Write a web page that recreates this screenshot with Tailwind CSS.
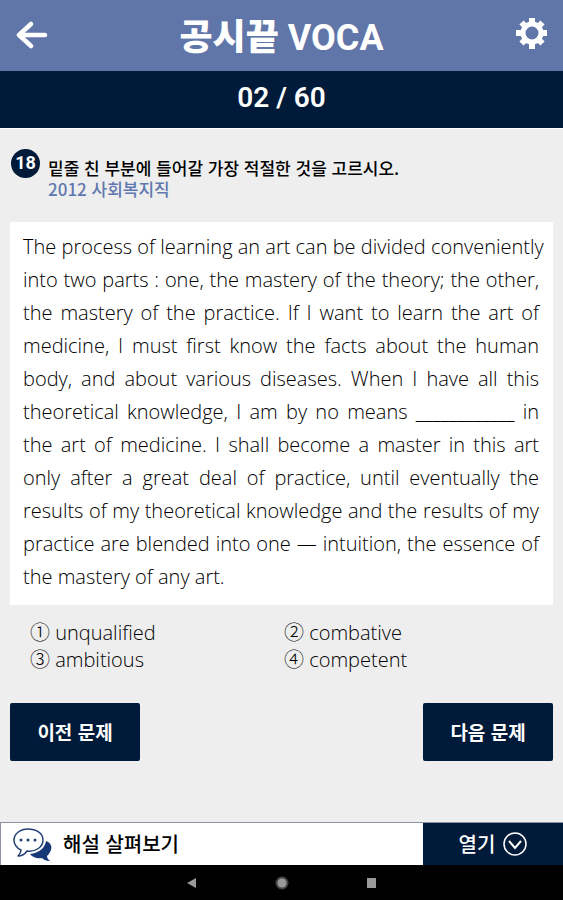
<!DOCTYPE html>
<html lang="ko">
  <head>
    <meta charset="UTF-8" />
    <meta name="viewport" content="width=device-width, initial-scale=1.0" />
    <title>공시끝 VOCA</title>
    <script src="https://cdn.jsdelivr.net/npm/@tailwindcss/browser@4"></script>
  </head>
  <body class="min-h-screen flex flex-col bg-[#eeeeee] text-black font-['Noto_Sans_CJK_KR',sans-serif]">
    <header class="h-[71px] px-4 flex justify-between items-center bg-[#6075a8] text-white">
      <button type="button" aria-label="뒤로" class="w-8 pb-1">
        <svg class="w-8 h-8" viewBox="0 0 32 32" fill="none" stroke="currentColor" stroke-width="4.5" stroke-linecap="round" stroke-linejoin="round">
          <path d="M29 17H3M15 6L3 17l12 11" />
        </svg>
      </button>
      <h1 class="pt-1 text-[36px] leading-none font-black font-['Roboto','Noto_Sans_CJK_KR',sans-serif]">공시끝 <span class="font-bold">VOCA</span></h1>
      <button type="button" aria-label="설정" class="w-8 pb-1">
        <svg class="w-8 h-8" viewBox="0 0 32 32" fill="none" stroke="currentColor">
          <circle cx="17" cy="15" r="9" stroke-width="5" />
          <path stroke-width="6" d="M17-1v6M17 25v6M1 15h6M27 15h6M6.5 4.5l4 4M23.5 21.5l4 4M27.5 4.5l-4 4M10.5 21.5l-4 4" />
        </svg>
      </button>
    </header>

    <div class="h-[57px] pb-1 flex justify-center items-center bg-[#001a3a] text-white text-[28px] leading-none font-semibold font-['Roboto',sans-serif]">02 / 60</div>

    <main class="flex-1 px-[10px] pt-5 border-t border-white">
      <div class="flex gap-2">
        <span class="w-[29px] h-[29px] pb-[2px] rounded-full bg-[#001a3a] text-white text-[18px] leading-none font-bold font-['Roboto',sans-serif] flex justify-center items-center ml-px">18</span>
        <div class="pt-2 text-[17px] leading-[21px] font-medium">
          <h2>밑줄 친 부분에 들어갈 가장 적절한 것을 고르시오.</h2>
          <p class="text-[#6078af]">2012 사회복지직</p>
        </div>
      </div>

      <!-- passage: one span per line, spread to both edges -->
      <p class="mt-[23px] bg-white pl-[13px] pr-[14px] pt-2 pb-3 text-[20px] leading-[33px] font-light text-black whitespace-nowrap font-['Open_Sans','Noto_Sans_CJK_KR',sans-serif] [&>span]:block [&>span]:[text-align-last:justify]">
        <span>The process of learning an art can be divided conveniently</span>
        <span>into two parts : one, the mastery of the theory; the other,</span>
        <span>the mastery of the practice. If I want to learn the art of</span>
        <span>medicine, I must first know the facts about the human</span>
        <span>body, and about various diseases. When I have all this</span>
        <span>theoretical knowledge, I am by no means ____________ in</span>
        <span>the art of medicine. I shall become a master in this art</span>
        <span>only after a great deal of practice, until eventually the</span>
        <span>results of my theoretical knowledge and the results of my</span>
        <span>practice are blended into one — intuition, the essence of</span>
        the mastery of any art.
      </p>

      <ol class="mt-[14px] pl-5 grid grid-cols-[254px_1fr] text-[20px] leading-[27px] font-light text-black font-['Open_Sans','Noto_Sans_CJK_KR',sans-serif]">
        <li>① unqualified</li>
        <li>② combative</li>
        <li>③ ambitious</li>
        <li>④ competent</li>
      </ol>

      <div class="mt-[30px] mb-8 flex justify-between text-white text-[19px] font-bold">
        <button type="button" class="w-[130px] h-[58px] rounded-xs bg-[#001a3a]">이전 문제</button>
        <button type="button" class="w-[130px] h-[58px] rounded-xs bg-[#001a3a]">다음 문제</button>
      </div>
    </main>

    <footer>
      <div class="h-[43px] flex border-t border-[#8c91a3] text-[20px] font-medium">
        <div class="flex-1 flex items-center gap-[10px] pl-3 bg-white border-l border-[#8c91a3]">
          <svg class="w-10 h-9" viewBox="0 0 40 36" fill="none">
            <path fill="#173876" d="M33 15c5 2 7 6 4 11-1 2-2 3-3 4 0 2 1 3 3 5-4 0-6-1-8-3-5 1-10-1-12-4 9-1 15-6 16-13z" />
            <path stroke="#234176" stroke-width="1.5" stroke-linejoin="round" d="M15 3C7 3 1 8 1 14c0 5 3 8 7 10 0 2-1 4-3 6 4 0 7-2 9-5 9 1 16-4 16-11C30 7 23 3 15 3z" />
            <g fill="#234176">
              <circle cx="8" cy="14" r="1.5" />
              <circle cx="15" cy="14" r="1.5" />
              <circle cx="22" cy="14" r="1.5" />
            </g>
          </svg>
          <span>해설 살펴보기</span>
        </div>
        <button type="button" class="w-[140px] flex justify-center items-center gap-2 bg-[#001a3a] text-white">
          열기
          <svg class="w-6 h-6" viewBox="0 0 24 24" fill="none" stroke="currentColor">
            <circle cx="12" cy="12" r="11" stroke-width="1.5" />
            <path stroke-width="2" d="M6 9l6 7 6-7" />
          </svg>
        </button>
      </div>
      <nav class="h-[35px] flex justify-center items-center gap-[76px] bg-black text-[#999999]">
        <button type="button" aria-label="뒤로 가기"><svg class="w-3 h-3" viewBox="0 0 12 12" fill="currentColor"><path d="M10 1v10L1 6z" /></svg></button>
        <button type="button" aria-label="홈"><svg class="w-4 h-4" viewBox="0 0 16 16" fill="currentColor"><circle cx="8" cy="8" r="6.5" opacity=".45" /><circle cx="8" cy="8" r="4.5" /></svg></button>
        <button type="button" aria-label="최근 앱"><svg class="w-3 h-3" viewBox="0 0 12 12" fill="currentColor"><path d="M1 1h9v10H1z" /></svg></button>
      </nav>
    </footer>
  </body>
</html>
